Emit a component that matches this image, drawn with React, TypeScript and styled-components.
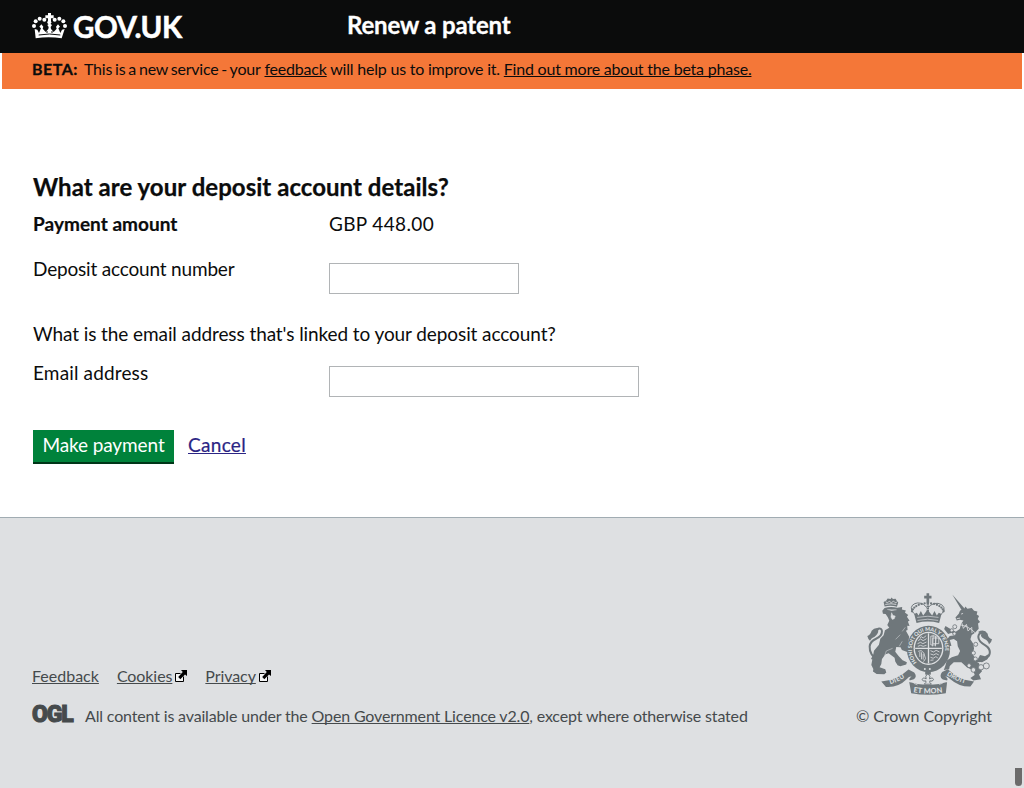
import React from "react";
import styled, { createGlobalStyle } from "styled-components";

const GlobalStyle = createGlobalStyle`
  * { box-sizing: border-box; }
  body { margin: 0; background: #fff; overflow: hidden; }
  a { color: inherit; text-underline-offset: 1px; text-decoration-thickness: 1px; text-decoration-skip-ink: none; }
`;

const Page = styled.div`
  display: flex;
  flex-direction: column;
  position: relative;
  height: 788px;
  font-family: Lato, "Liberation Sans", sans-serif;
  font-size: 19px;
  line-height: 26px;
  color: #0b0c0c;
`;

const Header = styled.header`
  display: flex;
  align-items: flex-start;
  height: 53px;
  padding-left: 32px;
  background: #0b0c0c;
  color: #fff;
`;

const Brand = styled.div`
  display: flex;
  width: 315px;
  gap: 6px;
  svg { margin-top: 13px; flex: none; }
`;

const BrandName = styled.span`
  font-size: 29.5px;
  font-weight: 700;
  line-height: 53px;
  letter-spacing: -0.5px;
  -webkit-text-stroke: 0.5px #fff;
`;

const ServiceName = styled.span`
  font-size: 24px;
  font-weight: 700;
  line-height: 50px;
  letter-spacing: -0.16px;
  -webkit-text-stroke: 0.3px #fff;
`;

const BetaBar = styled.div`
  height: 36px;
  margin: 0 2px;
  padding-left: 30px;
  background: #f47738;
  font-size: 16px;
  line-height: 32px;
  letter-spacing: -0.21px;
  white-space: nowrap;
`;

const BetaLabel = styled.strong`
  display: inline-block;
  width: 52px;
  letter-spacing: 0.5px;
  -webkit-text-stroke: 0.3px #0b0c0c;
`;

const Tight = styled.span`
  word-spacing: -1px;
`;

const Main = styled.main`
  display: flex;
  flex-direction: column;
  height: 428px;
  padding: 82px 33px 0;
`;

const Title = styled.h1`
  margin: 0 0 8px;
  font-size: 24px;
  line-height: 32px;
  letter-spacing: 0.04px;
  -webkit-text-stroke: 0.25px #0b0c0c;
`;

const Row = styled.div<{ $gap: number }>`
  display: grid;
  grid-template-columns: 296px 1fr;
  align-items: start;
  margin-bottom: ${(p) => p.$gap}px;
`;

const Label = styled.label<{ $track: number }>`
  letter-spacing: ${(p) => p.$track}px;
`;

const StrongLabel = styled.strong`
  letter-spacing: 0.03px;
  -webkit-text-stroke: 0.2px #0b0c0c;
`;

const Amount = styled.span`
  letter-spacing: 0.35px;
`;

const Hint = styled.p`
  margin: 0 0 13px;
  letter-spacing: -0.09px;
`;

const Field = styled.input<{ $width: number; $drop: number }>`
  width: ${(p) => p.$width}px;
  height: 31px;
  margin: ${(p) => p.$drop}px 0 0;
  padding: 4px;
  border: 1px solid #b1b4b6;
  border-radius: 0;
  font: inherit;
`;

const Actions = styled.div`
  display: flex;
  gap: 14px;
`;

const Submit = styled.button`
  width: 141px;
  height: 34px;
  padding: 0 0 2px;
  border: 0;
  border-bottom: 2px solid #003618;
  background: #00823b;
  color: #fff;
  font: inherit;
  line-height: 30px;
  letter-spacing: -0.1px;
`;

const Cancel = styled.a`
  && { color: #2b2484; }
  line-height: 30px;
  letter-spacing: 0.3px;
  -webkit-text-stroke: 0.2px #2b2484;
`;

const Footer = styled.footer`
  display: flex;
  justify-content: space-between;
  height: 271px;
  padding: 0 32px;
  border-top: 1px solid #a1acb2;
  background: #dee0e2;
  color: #454a4c;
  font-size: 16px;
  line-height: 20px;
`;

const FooterInfo = styled.div`
  display: flex;
  flex-direction: column;
  gap: 20px;
  padding-top: 148px;
`;

const FooterLinks = styled.nav`
  display: flex;
  gap: 18px;
`;

const External = styled.span`
  display: flex;
  gap: 3px;
  letter-spacing: -0.08px;
  svg { margin-top: 4px; }
`;

const Licence = styled.div`
  display: flex;
  letter-spacing: -0.16px;
  white-space: nowrap;
`;

const LicenceMark = styled.span`
  width: 53px;
  font: 900 23px/17px Roboto, sans-serif;
  letter-spacing: -1.1px;
  -webkit-text-stroke: 1px #454a4c;
`;

const Copyright = styled.div`
  display: flex;
  flex-direction: column;
  align-items: flex-end;
  gap: 11px;
  padding-top: 74px;
  letter-spacing: -0.07px;
`;

const ScrollThumb = styled.div`
  position: absolute;
  right: 2px;
  bottom: 2px;
  width: 7px;
  height: 18px;
  border-radius: 0 0 4px 4px;
  background: #6b6b6b;
`;

const Crown = () => (
  <svg width="35" height="26" viewBox="0 0 105 78" fill="#fff">
    <path d="M48 0h9v7h8v9h-8v10h-9V16h-8V7h8z" />
    <circle cx="52" cy="28" r="6" />
    <circle cx="37" cy="20" r="6" /><circle cx="23" cy="17" r="6" /><circle cx="11" cy="25" r="6" /><circle cx="6" cy="39" r="6" />
    <circle cx="68" cy="20" r="6" /><circle cx="82" cy="17" r="6" /><circle cx="94" cy="25" r="6" /><circle cx="99" cy="39" r="6" />
    <path d="M8 48l8 2 5 10 6-14-5-5 6-7 6 7-2 6 9 10 8-9 1-6-4-6 7-5 7 5-4 6 1 6 8 9 9-10-2-6 6-7 6 7-5 5 6 14 5-10 8-2-9 28q-39-7-78 0z" />
    <path d="M20 66q32-6 65 0M45 54v6M60 54v6" stroke="#0b0c0c" strokeWidth="3" fill="none" />
  </svg>
);

const ExternalIcon = () => (
  <svg width="12" height="12" viewBox="0 0 12 12">
    <path d="M5.5 3.5h-5v8h8v-5" fill="#f4f5f5" stroke="#000" />
    <path d="M6 0h6v6L10 4.400 5.300 9.200 3.200 7.100 7.800 2z" fill="#000" />
  </svg>
);

const grey = "#6f777b";
const light = "#dee0e2";
const domeBeads = Array.from({ length: 15 }, (_, i) => i);

const Crest = () => (
  <svg width="125" height="103" viewBox="51 36 376 309" fill={grey}>
    <defs>
      <path id="garter" d="M201 247A50 55 0 1 1 271 247" />
      <path id="dieu" d="M121 313Q145 307 174 287" />
      <path id="etmon" d="M190 337Q235 345 281 337" />
      <path id="droit" d="M290 285Q318 304 354 313" />
    </defs>

    {/* lion */}
    <path d="M104 79l-3-13 8-5 4-6 9 2 3-5 4 5 8-1 4 7 4 4-4 13q-18-5-37-1z" />
    <path d="M107 65l6 3 5-5 6 5 7-5 5 5 5-2M106 73q18-4 33 0" stroke={light} strokeWidth="2.5" fill="none" />
    <path d="M104 84q17-6 38-1l15-2-1 7 12 3-3 6 10 8-4 5 8 12-5 2 5 14-7-1 1 13-5 2 10 18-4 22 8 19-10 5-16-6-4-8-13-1-3 14 10 13 12 13 13 6-2 7-18 5-8-3-7-11-2-12-18-13-9 3-11 14-2 15-5 10 17 6 3 10-6 5-23-1-11-7 1-8-6-12 3-16-4-2 7-14 2-11 15-18 4-18 10-10 4-15 13-8-6-8 6-13-4-10-7-10-8-1-2-9z" />
    <path d="M112 88l13 3 15-2M125 98l4 8 7 2-3 8-6 2-4-7z" stroke={light} strokeWidth="1.500" fill={light} />
    <path d="M87 243Q57 225 59 199Q61 184 77 177Q97 168 96 153Q95 143 84 146" fill="none" stroke={grey} strokeWidth="6" />
    <path d="M90 145q-16-5-25 7-3 12-13 16 2 10 8 14 4-9 14-12 11-7 11-19z" />
    <path d="M128 205l-19 8-8 23M151 164l-14 14M157 184l-9 15M166 142l-9 12" stroke={light} strokeWidth="1.500" fill="none" />

    {/* unicorn */}
    <path d="M308 44l39 44-8 8z" />
    <path d="M317 112L327 101 331 91 343 87 347 79 353 86 366 84 373 92 383 94 381 103 388 108 384 117 391 126 385 130 387 146 376 158 366 165 362 178 371 192 373 206 368 222 376 233 373 241 388 250 392 264 397 274 388 284 394 298 371 302 362 294 375 285 370 271 352 263 335 247 312 247 300 258 298 268 282 270 287 257 291 242 306 232 325 226 331 213 324 199 322 184 312 177 300 180 305 197 298 199 290 180 300 168 316 166 306 158 295 162 283 147 287 138 301 146 318 155 330 147 334 131 341 121 330 119 321 121Z" />
    <path d="M334 102l6-2M321 116l10-2" stroke={light} strokeWidth="2.500" />
    <path d="M328 134q26 2 48 24M336 128l5 17 9-12 5 20 11-11 1 17" fill="none" stroke={light} strokeWidth="2.500" />
    <g fill={light} stroke={grey} strokeWidth="2.500">
      <circle cx="315" cy="140" r="6" /><circle cx="306" cy="151" r="5" /><circle cx="314" cy="161" r="5" />
      <circle cx="378" cy="193" r="6" /><circle cx="371" cy="219" r="6" /><circle cx="377" cy="237" r="6" />
      <circle cx="358" cy="257" r="6" /><circle cx="371" cy="270" r="7" /><circle cx="394" cy="262" r="8" /><circle cx="410" cy="258" r="9" />
    </g>
    <path d="M378 244q25 2 40-17 8-18-10-30-27-15-21-32 5-10 19-8" fill="none" stroke={grey} strokeWidth="6" />
    <path d="M385 156q18-11 29 5 1 13 13 17-1 9-9 15-3-12-14-16-14-8-9-15z" />
    <path d="M391 225l15 4 12-8-5 17-16 9-16-3z" />

    {/* crown */}
    <path d="M230 39h8v8h7v8h-7v14h-8V55h-7v-8h7z" />
    <path d="M201 108Q176 89 188 75Q202 63 221 73L233 84Q253 61 276 74Q294 89 267 109" fill="none" stroke={grey} strokeWidth="3" />
    {domeBeads.map((i) => {
      const a = Math.PI * (0.05 + (i / 14) * 0.9);
      return <circle key={i} cx={234 - Math.cos(a) * 48} cy={98 - Math.sin(a) * 29} r="3.500" />;
    })}
    <path d="M234 69v30" stroke={grey} strokeWidth="7" strokeDasharray="5 2" />
    <path d="M193 102l8-4 5 8 7-13 7 13 13-17 14 17 7-13 7 13 6-8 8 4-7 27q-34-9-68 0z" />
    <path d="M202 112q32-7 64 0M203 121q30-7 62 0" fill="none" stroke={light} strokeWidth="2" />

    {/* garter and shield */}
    <ellipse cx="236" cy="207" rx="65" ry="70" />
    <ellipse cx="236" cy="205" rx="45" ry="50" fill={light} />
    <ellipse cx="236" cy="205" rx="41" ry="46" />
    <path d="M236 160v90M196 205h80" stroke={light} strokeWidth="4" />
    <g fill="none" stroke={light} strokeWidth="2.500">
      <path d="M205 182l7-5 8 5 10-6M203 191l9-4 7 4 11-5M204 199l8-3 8 3 10-3M210 174l4-4 6 4 9-7" />
      <path d="M242 212l9 4 8-5 10 5M242 222l9 3 8-4 8 4M242 232l8 3 8-5 6 4M242 241l9-1" />
      <path d="M243 168h14v27h-14zM249 174h18v17h-18zM250 164l-2 35M259 168l-2 31" />
      <path d="M205 214l9-2 8 7 5 17-6 9M210 216v15M215 217v21M220 222v17" />
    </g>
    <text fill={light} fontFamily="Lato, sans-serif" fontWeight="900" fontSize="16" letterSpacing="-0.300">
      <textPath href="#garter">HONI SOIT QUI MAL Y PENSE</textPath>
    </text>
    <circle cx="225" cy="267" r="3" fill={light} /><circle cx="240" cy="267" r="3" fill={light} />

    {/* motto ribbon */}
    <path d="M94 305q45-2 82-36l17 9q10 12-1 20l-11 3q-5 0-1-7l5-4q-7-1-14 7-27 27-63 24z" />
    <path d="M373 305q-45-4-79-37l-17 8q-11 14 2 23l13 3q4-5-2-10l-4-3q8 0 15 8 27 24 61 23z" />
    <path d="M178 306q58 19 114 0l-4 34q-53 10-104 0z" />
    <path d="M180 306l12-5 1 10 10 4M291 306l-13-5v9l-10 4" stroke={light} strokeWidth="2" fill="none" />
    <path d="M234 280q-10 10-5 17-10-6-12 2 2 7 11 4v5l-5 5h22l-5-5v-5q9 3 11-4-2-8-12-2 5-7-5-17z" fill={light} stroke={grey} strokeWidth="3" />
    <path d="M226 275h17v9h-17z" />
    <g fill={light} fontFamily="Lato, sans-serif" fontWeight="900" fontSize="19">
      <text letterSpacing="1"><textPath href="#dieu">DIEU</textPath></text>
      <text fontSize="22" letterSpacing="0.500"><textPath href="#etmon">ET MON</textPath></text>
      <text letterSpacing="0.500"><textPath href="#droit">DROIT</textPath></text>
    </g>
  </svg>
);

export default function App() {
  return (
    <Page>
      <GlobalStyle />
      <Header>
        <Brand>
          <Crown />
          <BrandName>GOV.UK</BrandName>
        </Brand>
        <ServiceName>Renew a patent</ServiceName>
      </Header>
      <BetaBar>
        <BetaLabel>BETA:</BetaLabel>
        <Tight>This is a new service - your</Tight> <a href="#feedback">feedback</a> will help us to improve it.{" "}
        <a href="#beta">Find out more about the beta phase.</a>
      </BetaBar>
      <Main>
        <Title>What are your deposit account details?</Title>
        <Row $gap={19}>
          <StrongLabel>Payment amount</StrongLabel>
          <Amount>GBP 448.00</Amount>
        </Row>
        <Row $gap={27}>
          <Label htmlFor="account" $track={-0.18}>Deposit account number</Label>
          <Field id="account" $width={190} $drop={7} />
        </Row>
        <Hint>What is the email address that's linked to your deposit account?</Hint>
        <Row $gap={33}>
          <Label htmlFor="email" $track={0.15}>Email address</Label>
          <Field id="email" $width={310} $drop={6} />
        </Row>
        <Actions>
          <Submit>Make payment</Submit>
          <Cancel href="#cancel">Cancel</Cancel>
        </Actions>
      </Main>
      <Footer>
        <FooterInfo>
          <FooterLinks>
            <a href="#feedback">Feedback</a>
            <External><a href="#cookies">Cookies</a><ExternalIcon /></External>
            <External><a href="#privacy">Privacy</a><ExternalIcon /></External>
          </FooterLinks>
          <Licence>
            <LicenceMark>OGL</LicenceMark>
            <span>
              All content is available under the <a href="#ogl">Open Government Licence v2.0</a>, except where otherwise stated
            </span>
          </Licence>
        </FooterInfo>
        <Copyright>
          <Crest />
          <span>© Crown Copyright</span>
        </Copyright>
      </Footer>
      <ScrollThumb />
    </Page>
  );
}
